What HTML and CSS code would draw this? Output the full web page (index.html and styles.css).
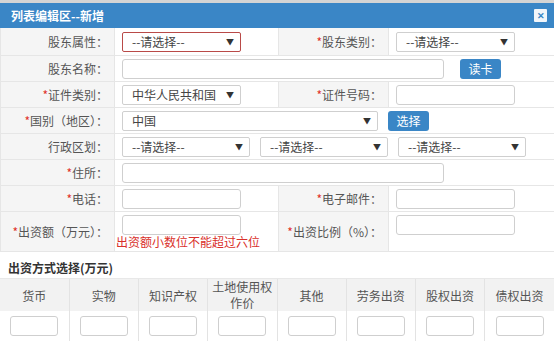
FILE: index.html
```html
<!DOCTYPE html>
<html lang="zh-CN">

<head>
    <meta charset="UTF-8">
    <title>列表编辑区--新增</title>
    <link rel="stylesheet" href="styles.css">
</head>

<body>
    <div class="dialog">
        <div class="dialog-header">
            <span class="dialog-title">列表编辑区--新增</span>
            <span class="dialog-close">✕</span>
        </div>
        <table class="form-table">
            <colgroup>
                <col class="col-label">
                <col class="col-field">
                <col class="col-label2">
                <col>
            </colgroup>
            <tr>
                <th>股东属性：</th>
                <td><div class="fake-select error"><span>--请选择--</span><i>▼</i></div></td>
                <th><em>*</em>股东类别：</th>
                <td><div class="fake-select"><span>--请选择--</span><i>▼</i></div></td>
            </tr>
            <tr>
                <th>股东名称：</th>
                <td colspan="3">
                    <div class="inline">
                        <input type="text" class="ipt ipt-long">
                        <a class="btn btn-card">读卡</a>
                    </div>
                </td>
            </tr>
            <tr>
                <th><em>*</em>证件类别：</th>
                <td><div class="fake-select"><span>中华人民共和国</span><i>▼</i></div></td>
                <th><em>*</em>证件号码：</th>
                <td><input type="text" class="ipt"></td>
            </tr>
            <tr>
                <th><em>*</em>国别（地区）：</th>
                <td colspan="3">
                    <div class="inline">
                        <div class="fake-select wide"><span>中国</span><i>▼</i></div>
                        <a class="btn btn-pick">选择</a>
                    </div>
                </td>
            </tr>
            <tr>
                <th>行政区划：</th>
                <td colspan="3">
                    <div class="inline region">
                        <div class="fake-select mid"><span>--请选择--</span><i>▼</i></div>
                        <div class="fake-select mid"><span>--请选择--</span><i>▼</i></div>
                        <div class="fake-select mid"><span>--请选择--</span><i>▼</i></div>
                    </div>
                </td>
            </tr>
            <tr>
                <th><em>*</em>住所：</th>
                <td colspan="3"><input type="text" class="ipt ipt-long"></td>
            </tr>
            <tr>
                <th><em>*</em>电话：</th>
                <td><input type="text" class="ipt"></td>
                <th><em>*</em>电子邮件：</th>
                <td><input type="text" class="ipt"></td>
            </tr>
            <tr class="row-tall">
                <th><em>*</em>出资额（万元）：</th>
                <td>
                    <input type="text" class="ipt">
                    <div class="err-msg">出资额小数位不能超过六位</div>
                </td>
                <th><em>*</em>出资比例（%）：</th>
                <td><input type="text" class="ipt"></td>
            </tr>
        </table>

        <div class="section-title">出资方式选择(万元)</div>
        <table class="pay-table">
            <tr>
                <th>货币</th>
                <th>实物</th>
                <th>知识产权</th>
                <th><span class="two-line">土地使用权</span><span class="two-line">作价</span></th>
                <th>其他</th>
                <th>劳务出资</th>
                <th>股权出资</th>
                <th>债权出资</th>
            </tr>
            <tr>
                <td><input type="text" class="ipt-small"></td>
                <td><input type="text" class="ipt-small"></td>
                <td><input type="text" class="ipt-small"></td>
                <td><input type="text" class="ipt-small"></td>
                <td><input type="text" class="ipt-small"></td>
                <td><input type="text" class="ipt-small"></td>
                <td><input type="text" class="ipt-small"></td>
                <td><input type="text" class="ipt-small"></td>
            </tr>
        </table>
    </div>
</body>

</html>
```

FILE: styles.css
```css
body {
    margin: 0;
    padding: 0;
    background-color: #fff;
    font-family: "Noto Sans CJK SC", "Liberation Sans", sans-serif;
    font-size: 12px;
    color: #555;
}

.dialog {
    width: 554px;
    border-top: 3px solid #d4d4d4;
}

.dialog-header {
    height: 25px;
    background-color: #3a86c6;
    display: flex;
    align-items: center;
    justify-content: space-between;
    padding: 0 7px 0 11px;
}

.dialog-title {
    color: #fff;
    font-weight: bold;
    font-size: 12px;
}

.dialog-close {
    width: 13px;
    height: 13px;
    background-color: #f2f6fa;
    color: #3a86c6;
    font-size: 9px;
    font-weight: bold;
    line-height: 13px;
    text-align: center;
    border-radius: 1px;
}

.form-table {
    width: 100%;
    border-collapse: collapse;
    table-layout: fixed;
}

.col-label {
    width: 114px;
}

.col-field {
    width: 164px;
}

.col-label2 {
    width: 110px;
}

.form-table th,
.form-table td {
    border-bottom: 1px solid #e6e6e6;
    height: 25px;
    padding: 0;
}

.form-table th {
    background-color: #f5f5f5;
    font-weight: normal;
    text-align: right;
    padding-right: 6px;
    color: #555;
    white-space: nowrap;
    border-right: 1px solid #e6e6e6;
    border-left: 1px solid #e6e6e6;
}

.form-table td {
    padding-left: 7px;
}

.form-table th em {
    color: #e0302a;
    font-style: normal;
}

.form-table tr:first-child th,
.form-table tr:first-child td {
    height: 27px;
}

.row-tall th,
.row-tall td {
    height: 36px;
}

.row-tall td {
    vertical-align: top;
    padding-top: 3px;
}

.inline {
    display: flex;
    align-items: center;
}

.region {
    gap: 10px;
}

.ipt {
    box-sizing: border-box;
    width: 119px;
    height: 20px;
    border: 1px solid #cfcfcf;
    border-radius: 3px;
    padding: 0 6px;
    display: block;
    font-family: inherit;
}

.ipt-long {
    width: 322px;
}

.fake-select {
    box-sizing: border-box;
    width: 119px;
    height: 20px;
    border: 1px solid #cfcfcf;
    border-radius: 2px;
    display: flex;
    align-items: center;
    justify-content: space-between;
    padding: 0 6px 0 9px;
    color: #444;
    white-space: nowrap;
}

.fake-select span {
    overflow: hidden;
}

.fake-select i {
    font-style: normal;
    font-size: 8px;
    color: #333;
    margin-left: 6px;
    flex-shrink: 0;
}

.fake-select.error {
    border-color: #b94a48;
}

.fake-select.wide {
    width: 256px;
}

.fake-select.mid {
    width: 128px;
}

.btn {
    display: inline-block;
    background-color: #3a86c6;
    color: #fff;
    border-radius: 3px;
    height: 20px;
    line-height: 20px;
    width: 41px;
    text-align: center;
    font-size: 12px;
}

.btn-card {
    margin-left: 16px;
}

.btn-pick {
    margin-left: 10px;
}

.err-msg {
    color: #d9302a;
    font-size: 12px;
    margin-left: -6px;
    line-height: 14px;
}

.section-title {
    font-weight: bold;
    color: #333;
    padding: 7px 0 0 8px;
    height: 19px;
}

.pay-table {
    width: 100%;
    border-collapse: collapse;
    table-layout: fixed;
}

.pay-table th {
    background-color: #f2f2f2;
    font-weight: normal;
    height: 32px;
    padding: 0;
    color: #555;
    border-left: 1px solid #e3e3e3;
    border-top: 1px solid #e8e8e8;
}

.two-line {
    display: block;
    line-height: 16px;
    font-size: 12px;
}

.pay-table td {
    height: 30px;
    text-align: center;
    padding: 0;
    border-left: 1px solid #e3e3e3;
    border-bottom: 1px solid #e3e3e3;
}

.pay-table th:first-child,
.pay-table td:first-child {
    border-left: none;
}

.ipt-small {
    box-sizing: border-box;
    width: 48px;
    height: 20px;
    border: 1px solid #cfcfcf;
    border-radius: 3px;
}
```
